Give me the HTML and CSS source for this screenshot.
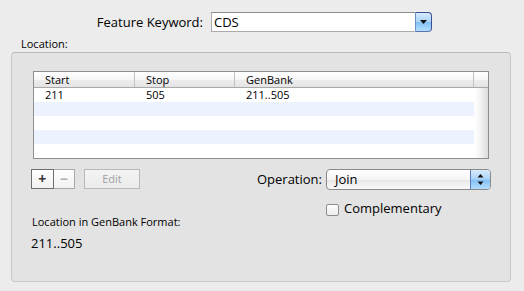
FILE: index.html
```html
<!DOCTYPE html>
<html lang="en">
<head>
    <meta charset="UTF-8">
    <title>Feature Location</title>
    <link rel="stylesheet" href="styles.css">
</head>
<body>
    <div class="window">
        <div class="keyword-row">
            <div class="keyword-label">Feature Keyword:</div>
            <div class="combo">
                <div class="combo-text">CDS</div>
                <div class="combo-button">
                    <svg width="7" height="4" viewBox="0 0 7 4"><path d="M0 0H7L3.5 4Z" fill="#111"/></svg>
                </div>
            </div>
        </div>

        <div class="box-title">Location:</div>

        <div class="group">
            <div class="table">
                <div class="table-head">
                    <div class="head-cell">Start</div>
                    <div class="head-cell">Stop</div>
                    <div class="head-cell">GenBank</div>
                    <div class="head-cell head-corner"></div>
                </div>
                <div class="table-body">
                    <div class="rows">
                        <div class="row">
                            <div class="cell">211</div>
                            <div class="cell">505</div>
                            <div class="cell">211..505</div>
                        </div>
                        <div class="row"></div>
                        <div class="row"></div>
                        <div class="row"></div>
                        <div class="row"></div>
                    </div>
                    <div class="scroll-track"></div>
                </div>
            </div>

            <div class="controls">
                <div class="controls-left">
                    <div class="buttons">
                        <div class="segmented">
                            <div class="seg seg-add">+</div>
                            <div class="seg seg-remove">−</div>
                        </div>
                        <div class="edit-btn">Edit</div>
                    </div>
                    <div class="format-label">Location in GenBank Format:</div>
                    <div class="format-value">211..505</div>
                </div>

                <div class="controls-right">
                    <div class="operation-label">Operation:</div>
                    <div class="popup">
                        <div class="popup-text">Join</div>
                        <div class="popup-stepper">
                            <svg width="7" height="11" viewBox="0 0 7 11">
                                <path d="M3.5 0L6.5 3.5H0.5Z" fill="#111"/>
                                <path d="M0.5 7.5H6.5L3.5 11Z" fill="#111"/>
                            </svg>
                        </div>
                    </div>
                    <div class="check">
                        <div class="checkbox"></div>
                        <div class="check-text">Complementary</div>
                    </div>
                </div>
            </div>
        </div>
    </div>
</body>
</html>
```

FILE: styles.css
```css
* {
    margin: 0;
    padding: 0;
    box-sizing: border-box;
}

body {
    font-family: 'Open Sans', 'DejaVu Sans', sans-serif;
    background: #ececec;
    color: #000;
    width: 524px;
    height: 291px;
    overflow: hidden;
}

/* Feature keyword */

.keyword-row {
    display: flex;
    padding-top: 12px;
}

.keyword-label {
    width: 203px;
    margin-right: 8px;
    text-align: right;
    font-size: 13px;
    line-height: 20px;
}

.combo {
    display: flex;
    width: 221px;
    height: 20px;
}

.combo-text {
    flex: 1;
    background: #fff;
    border: 1px solid #aaa;
    border-top-color: #8c8c8c;
    border-right: none;
    padding-left: 2px;
    font-size: 13px;
    line-height: 18px;
}

.combo-button {
    width: 17px;
    display: flex;
    align-items: center;
    justify-content: center;
    border: 1px solid #3e4f9a;
    border-left-color: #6f8fc4;
    border-bottom-color: #5a73b4;
    border-radius: 0 4px 4px 0;
    background: linear-gradient(#d6ebfc 0%, #abd4f8 48%, #82c0f4 52%, #b2defd 100%);
}

.box-title {
    margin-top: 5px;
    padding-left: 21px;
    font-size: 11px;
    line-height: 14px;
}

/* Group box */

.group {
    margin: 1px 13px 0 11px;
    height: 230px;
    padding: 18px 19px 0 19px;
    background: #e3e3e3;
    border: 1px solid #c8c8c8;
    border-top-color: #b8b8b8;
    border-radius: 4px;
}

.table {
    margin: 0 2px;
    border: 1px solid #8e8e8e;
    background: #fff;
    font-size: 11px;
}

.table-head {
    display: grid;
    grid-template-columns: 101px 100px 239px 14px;
    height: 16px;
    border-bottom: 1px solid #a8a8a8;
    background: linear-gradient(#ffffff 0%, #f6f6f6 50%, #ececec 55%, #e4e4e4 100%);
}

.head-cell {
    border-right: 1px solid #c2c2c2;
    padding-left: 11px;
    line-height: 15px;
}

.head-corner {
    border-right: none;
}

.table-body {
    display: flex;
    height: 70px;
}

.rows {
    width: 440px;
}

.row {
    display: grid;
    grid-template-columns: 101px 100px 239px;
    height: 14px;
}

.row:nth-child(even) {
    background: #edf3fe;
}

.cell {
    padding-left: 11px;
    line-height: 13px;
}

.scroll-track {
    flex: 1;
    background: linear-gradient(to right, #ffffff 0%, #f7f7f7 35%, #dcdcdc 100%);
}

/* Controls under the table */

.controls {
    display: flex;
    justify-content: space-between;
    align-items: flex-start;
    margin-top: 10px;
}

.buttons {
    display: flex;
    gap: 9px;
    height: 20px;
}

.segmented {
    display: flex;
    width: 44px;
}

.seg {
    flex: 1;
    display: flex;
    align-items: center;
    justify-content: center;
    background: linear-gradient(#ffffff, #f1f1f1);
    border: 1px solid #a8a8a8;
    font-size: 14px;
    font-weight: 700;
    line-height: 1;
}

.seg-add {
    border-color: #6e6e6e;
    color: #333;
}

.seg-remove {
    border-left: none;
    color: #b0b0b0;
}

.edit-btn {
    width: 56px;
    border: 1px solid #b9b9b9;
    background: linear-gradient(#f4f4f4, #ebebeb);
    color: #a0a0a0;
    font-size: 11px;
    line-height: 18px;
    text-align: center;
}

.format-label {
    margin: 26px 0 0 1px;
    font-size: 11px;
    line-height: 14px;
}

.format-value {
    margin-top: 6px;
    font-size: 13px;
    line-height: 16px;
}

.controls-right {
    display: grid;
    grid-template-columns: auto 165px;
    column-gap: 4px;
    row-gap: 10px;
    font-size: 13px;
}

.operation-label {
    line-height: 21px;
    text-align: right;
}

.popup {
    display: flex;
    height: 21px;
    border: 1px solid #8a8a8a;
    border-radius: 4px;
    background: linear-gradient(#ffffff 0%, #f4f4f4 50%, #e9e9e9 55%, #fafafa 100%);
    overflow: hidden;
}

.popup-text {
    flex: 1;
    padding-left: 8px;
    line-height: 19px;
}

.popup-stepper {
    width: 20px;
    display: flex;
    align-items: center;
    justify-content: center;
    border-left: 1px solid #5e7bbb;
    background: linear-gradient(#d6ebfc 0%, #abd4f8 48%, #82c0f4 52%, #b2defd 100%);
}

.check {
    grid-column: 2;
    display: flex;
    align-items: flex-start;
}

.checkbox {
    width: 13px;
    height: 12px;
    margin-top: 4px;
    margin-right: 5px;
    border: 1px solid #8c8c8c;
    border-radius: 2px;
    background: linear-gradient(#fdfdfd, #ececec);
}

.check-text {
    line-height: 16px;
}
```
